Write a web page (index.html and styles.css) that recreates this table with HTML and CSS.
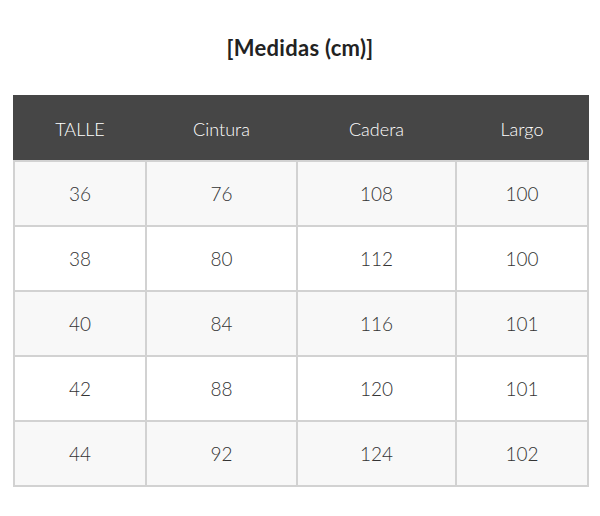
FILE: index.html
```html
<!DOCTYPE html>
<html lang="es">
<head>
<meta charset="utf-8">
<link rel="stylesheet" href="styles.css">
</head>
<body>
<div class="page">
  <h2 class="title">[Medidas (cm)]</h2>
  <table class="sizes">
    <colgroup>
      <col class="c1"><col class="c2"><col class="c3"><col class="c4">
    </colgroup>
    <thead>
      <tr><th>TALLE</th><th>Cintura</th><th>Cadera</th><th>Largo</th></tr>
    </thead>
    <tbody>
      <tr><td>36</td><td>76</td><td>108</td><td>100</td></tr>
      <tr><td>38</td><td>80</td><td>112</td><td>100</td></tr>
      <tr><td>40</td><td>84</td><td>116</td><td>101</td></tr>
      <tr><td>42</td><td>88</td><td>120</td><td>101</td></tr>
      <tr><td>44</td><td>92</td><td>124</td><td>102</td></tr>
    </tbody>
  </table>
</div>
</body>
</html>
```

FILE: styles.css
```css
html, body {
  margin: 0;
  padding: 0;
  background: #ffffff;
}
.page {
  padding: 0 13px;
  font-family: "Lato", "Liberation Sans", sans-serif;
  color: #333333;
}
.title {
  margin: 0;
  padding-top: 35px;
  height: 95px;
  box-sizing: border-box;
  text-align: center;
  font-size: 22px;
  font-weight: 700;
  line-height: 26px;
  color: #222222;
  letter-spacing: 0.3px;
}
.sizes {
  width: 574px;
  border-collapse: collapse;
  table-layout: fixed;
  border: 2px solid #d2d2d2;
}
.c1 { width: 132px; }
.c2 { width: 151px; }
.c3 { width: 159px; }
.c4 { width: 132px; }
.sizes th {
  background: #464646;
  color: #ffffff;
  font-weight: 300;
  font-size: 18px;
  height: 63px;
  padding: 0;
  border: 2px solid #464646;
  border-bottom-color: #d2d2d2;
  text-align: center;
  vertical-align: middle;
}
.sizes td {
  height: 63px;
  padding: 0;
  border: 2px solid #d2d2d2;
  text-align: center;
  vertical-align: middle;
  font-size: 19px;
  font-weight: 300;
  color: #333333;
}
.sizes tbody tr:nth-child(odd) td {
  background: #f8f8f8;
}
.sizes tbody tr:nth-child(even) td {
  background: #ffffff;
}
```
